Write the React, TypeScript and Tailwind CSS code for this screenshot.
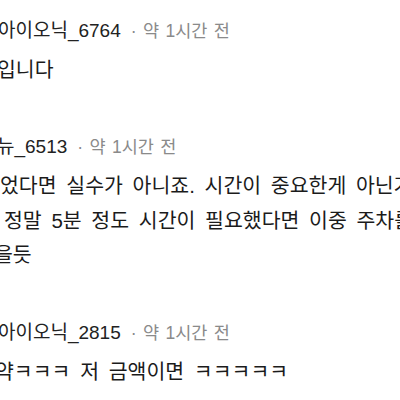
export default function App() {
  const font = { fontFamily: '"Liberation Sans", "Noto Sans CJK KR", sans-serif' };
  return (
    <div className="w-[400px] h-[400px] overflow-hidden bg-white text-[#1b1b1b]" style={font}>
      <div className="pt-[19px]">
        <div className="flex items-baseline whitespace-nowrap leading-[24px] -ml-[2px]">
          <span className="text-[19px] text-[#222]">아이오닉_6764</span>
          <span className="text-[17.5px] text-[#8a8a8a] ml-[10px] [word-spacing:1.5px]">· 약 1시간 전</span>
        </div>
        <div className="mt-[10px] text-[20.5px] leading-[34px] whitespace-nowrap -ml-[3px]">입니다</div>
      </div>
      <div className="pt-[48px]">
        <div className="flex items-baseline whitespace-nowrap leading-[24px] -ml-[3px]">
          <span className="text-[19px] text-[#222]">뉴_6513</span>
          <span className="text-[17.5px] text-[#8a8a8a] ml-[10px] [word-spacing:1.5px]">· 약 1시간 전</span>
        </div>
        <div className="mt-[10px] text-[20.5px] leading-[34.5px] whitespace-nowrap [word-spacing:4px]">
          <div className="ml-0">었다면 실수가 아니죠. 시간이 중요한게 아닌거</div>
          <div className="ml-[4px]">정말 5분 정도 시간이 필요했다면 이중 주차를</div>
          <div className="-ml-[6px]">을듯</div>
        </div>
      </div>
      <div className="pt-[48px]">
        <div className="flex items-baseline whitespace-nowrap leading-[24px] -ml-[2px]">
          <span className="text-[19px] text-[#222]">아이오닉_2815</span>
          <span className="text-[17.5px] text-[#8a8a8a] ml-[10px] [word-spacing:1.5px]">· 약 1시간 전</span>
        </div>
        <div className="mt-[10px] text-[20.5px] leading-[34px] whitespace-nowrap -ml-[5px] [word-spacing:4px]">약ㅋㅋㅋ 저 금액이면 ㅋㅋㅋㅋㅋ</div>
      </div>
    </div>
  );
}
